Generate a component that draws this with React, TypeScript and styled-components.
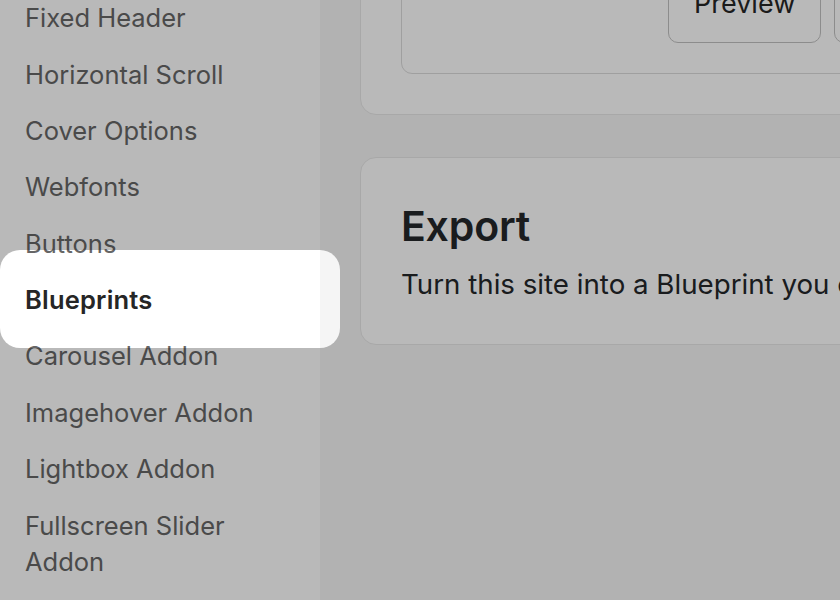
import React from "react";
import styled, { createGlobalStyle } from "styled-components";

const GlobalStyle = createGlobalStyle`
  html, body { margin: 0; padding: 0; }
  body {
    font-family: Inter, "Noto Sans", "Liberation Sans", sans-serif;
    overflow: hidden;
    background: #f5f5f5;
  }
`;

const Page = styled.div`
  display: flex;
  width: 840px;
  height: 600px;
  overflow: hidden;
  position: relative;
`;

const Sidebar = styled.nav`
  width: 320px;
  flex: 0 0 320px;
  background: #ffffff;
`;

const NavList = styled.ul`
  list-style: none;
  margin: -10px 0 0;
  padding: 0;
`;

const NavItem = styled.li<{ $active?: boolean }>`
  position: relative;
  padding: 10.2px 24px 10.2px 25px;
  font-size: 25.5px;
  line-height: 36px;
  color: ${(p) => (p.$active ? "#262626" : "#666666")};
  font-weight: ${(p) => (p.$active ? 600 : 400)};
  letter-spacing: ${(p) => (p.$active ? "0.2px" : "0")};
`;

const Spotlight = styled.div`
  position: absolute;
  top: -22px;
  bottom: -20px;
  left: 0;
  right: -20px;
  border-radius: 20px;
  box-shadow: 0 0 0 3000px rgba(0, 0, 0, 0.275);
  z-index: 10;
  pointer-events: none;
`;

const Main = styled.main`
  flex: 1;
  min-width: 0;
  background: #f5f5f5;
  padding: 0 0 0 40px;
  display: flex;
  flex-direction: column;
  gap: 42px;
`;

const Card = styled.section<{ $offset?: number }>`
  width: 760px;
  flex: none;
  background: #ffffff;
  border: 1px solid #e8e8e8;
  border-radius: 16px;
  padding: 40px;
  margin-top: ${(p) => p.$offset ?? 0}px;
`;

const InnerBox = styled.div`
  border: 1px solid #dcdcdc;
  border-radius: 11px;
  padding: 30px 30px 30px 266px;
  display: flex;
  justify-content: flex-start;
  gap: 13px;
`;

const Button = styled.button`
  font-family: inherit;
  font-size: 27px;
  line-height: 36px;
  color: #262626;
  background: #ffffff;
  border: 1px solid #c2c2c2;
  border-radius: 10px;
  padding: 20px 25px;
  flex: none;
`;

const Heading = styled.h2`
  margin: 0;
  padding-top: 4px;
  font-size: 41px;
  line-height: 48px;
  font-weight: 600;
  color: #24272a;
  letter-spacing: -0.2px;
`;

const Body = styled.p`
  margin: 14px 0 0;
  font-size: 27.7px;
  line-height: 40px;
  color: #24272a;
  white-space: nowrap;
`;

const items = [
  "Fixed Header",
  "Horizontal Scroll",
  "Cover Options",
  "Webfonts",
  "Buttons",
  "Blueprints",
  "Carousel Addon",
  "Imagehover Addon",
  "Lightbox Addon",
  "Fullscreen Slider Addon",
  "Header Options",
];

export default function App() {
  return (
    <>
      <GlobalStyle />
      <Page>
        <Sidebar>
          <NavList>
            {items.map((label) => (
              <NavItem key={label} $active={label === "Blueprints"}>
                {label === "Fullscreen Slider Addon" ? (
                  <>
                    Fullscreen Slider
                    <br />
                    Addon
                  </>
                ) : (
                  label
                )}
                {label === "Blueprints" && <Spotlight />}
              </NavItem>
            ))}
          </NavList>
        </Sidebar>
        <Main>
          <Card $offset={-107}>
            <InnerBox>
              <Button>Preview</Button>
              <Button>Export</Button>
            </InnerBox>
          </Card>
          <Card>
            <Heading>Export</Heading>
            <Body>Turn this site into a Blueprint you can reuse.</Body>
          </Card>
        </Main>
      </Page>
    </>
  );
}
